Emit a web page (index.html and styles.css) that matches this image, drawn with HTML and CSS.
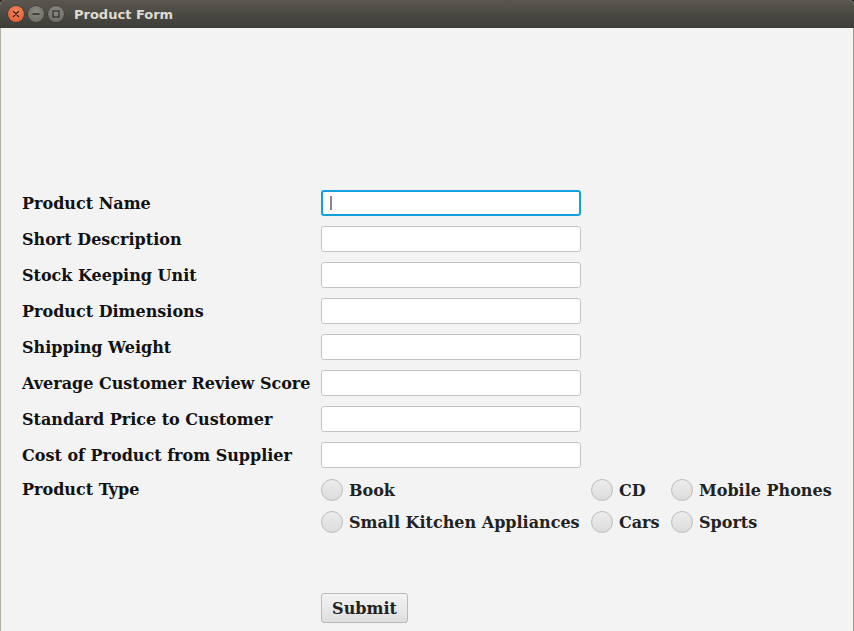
FILE: index.html
```html
<!DOCTYPE html>
<html>
<head>
<meta charset="utf-8">
<link rel="stylesheet" href="styles.css">
</head>
<body>
<div class="window">
  <div class="titlebar">
    <div class="controls">
      <span class="btn close"><svg width="16" height="16" viewBox="0 0 16 16"><path d="M5.5 5.5L10.5 10.5M10.5 5.5L5.5 10.5" stroke="#3a1a0c" stroke-width="1.3" stroke-linecap="round"/></svg></span>
      <span class="btn"><svg width="16" height="16" viewBox="0 0 16 16"><path d="M4.5 8H11.5" stroke="#2e2d2a" stroke-width="1.4"/></svg></span>
      <span class="btn"><svg width="16" height="16" viewBox="0 0 16 16"><rect x="5" y="5" width="6" height="6" fill="none" stroke="#2e2d2a" stroke-width="1.2"/></svg></span>
    </div>
    <div class="title">Product Form</div>
  </div>
  <div class="content">
    <form class="form">
      <label class="label">Product Name</label>
      <div class="field focused"><span class="caret"></span></div>
      <label class="label">Short Description</label>
      <div class="field"></div>
      <label class="label">Stock Keeping Unit</label>
      <div class="field"></div>
      <label class="label">Product Dimensions</label>
      <div class="field"></div>
      <label class="label">Shipping Weight</label>
      <div class="field"></div>
      <label class="label">Average Customer Review Score</label>
      <div class="field"></div>
      <label class="label">Standard Price to Customer</label>
      <div class="field"></div>
      <label class="label">Cost of Product from Supplier</label>
      <div class="field"></div>
      <label class="label type-label">Product Type</label>
      <div class="radios">
        <div class="radio"><span class="dot"></span><span>Book</span></div>
        <div class="radio"><span class="dot"></span><span>CD</span></div>
        <div class="radio"><span class="dot"></span><span>Mobile Phones</span></div>
        <div class="radio"><span class="dot"></span><span>Small Kitchen Appliances</span></div>
        <div class="radio"><span class="dot"></span><span>Cars</span></div>
        <div class="radio"><span class="dot"></span><span>Sports</span></div>
      </div>
      <div class="spacer"></div>
      <div class="submit-cell"><button type="button" class="submit">Submit</button></div>
    </form>
  </div>
</div>
</body>
</html>
```
FILE: styles.css
```css
html, body {
  margin: 0;
  padding: 0;
  background: #2b2a27;
}
.window {
  width: 854px;
  height: 631px;
  background: #f3f3f3;
  border-radius: 5px 5px 0 0;
  overflow: hidden;
  display: flex;
  flex-direction: column;
}
.titlebar {
  height: 28px;
  flex: none;
  background: linear-gradient(#5a5750, #3d3c37);
  display: flex;
  align-items: center;
  padding-left: 8px;
  box-sizing: border-box;
}
.controls {
  display: flex;
  gap: 4px;
}
.btn {
  width: 16px;
  height: 16px;
  border-radius: 50%;
  background: radial-gradient(circle at 50% 35%, #8d8a83, #6b6861);
  box-shadow: 0 0 0 0.5px #33322e;
  display: block;
}
.btn svg { display: block; }
.btn.close {
  background: radial-gradient(circle at 50% 35%, #f48a5f, #e0532b);
}
.title {
  margin-left: 10px;
  color: #dfdbd2;
  font-family: "DejaVu Sans", sans-serif;
  font-weight: bold;
  font-size: 13px;
}
.content {
  flex: 1;
  padding: 162px 0 0 21px;
  border-left: 1px solid #b5b0a6;
  border-right: 1px solid #9c9a95;
}
.form {
  display: grid;
  grid-template-columns: 299px 260px;
  row-gap: 10px;
  align-items: center;
  font-family: "DejaVu Serif", serif;
  font-weight: bold;
  font-size: 16px;
  color: #111;
}
.label {
  white-space: nowrap;
}
.type-label {
  align-self: start;
  margin-top: 2px;
}
.field {
  height: 26px;
  box-sizing: border-box;
  background: #fff;
  border: 1px solid #c4c4c4;
  border-radius: 3px;
  position: relative;
}
.field.focused {
  border: 2px solid #15a0dc;
}
.caret {
  position: absolute;
  left: 7px;
  top: 4px;
  width: 2px;
  height: 14px;
  background: #888;
}
.radios {
  grid-column: 2 / span 1;
  display: grid;
  grid-template-columns: 270px 80px 170px;
  row-gap: 10px;
  width: 520px;
  margin-top: 1px;
}
.radio {
  display: flex;
  align-items: center;
  gap: 6px;
  height: 22px;
  color: #222;
  white-space: nowrap;
}
.dot {
  width: 20px;
  height: 20px;
  border-radius: 50%;
  border: 1px solid #bdbdbd;
  background: linear-gradient(#ececec, #dcdcdc);
  flex: none;
}
.spacer {
  grid-column: 1 / span 2;
  height: 40px;
}
.submit-cell {
  grid-column: 2;
}
.submit {
  width: 87px;
  height: 30px;
  font-family: "DejaVu Serif", serif;
  font-weight: bold;
  font-size: 16px;
  color: #222;
  background: linear-gradient(#f4f4f4, #dedede);
  border: 1px solid #b9b9b9;
  border-radius: 3px;
  padding: 0;
}
```
